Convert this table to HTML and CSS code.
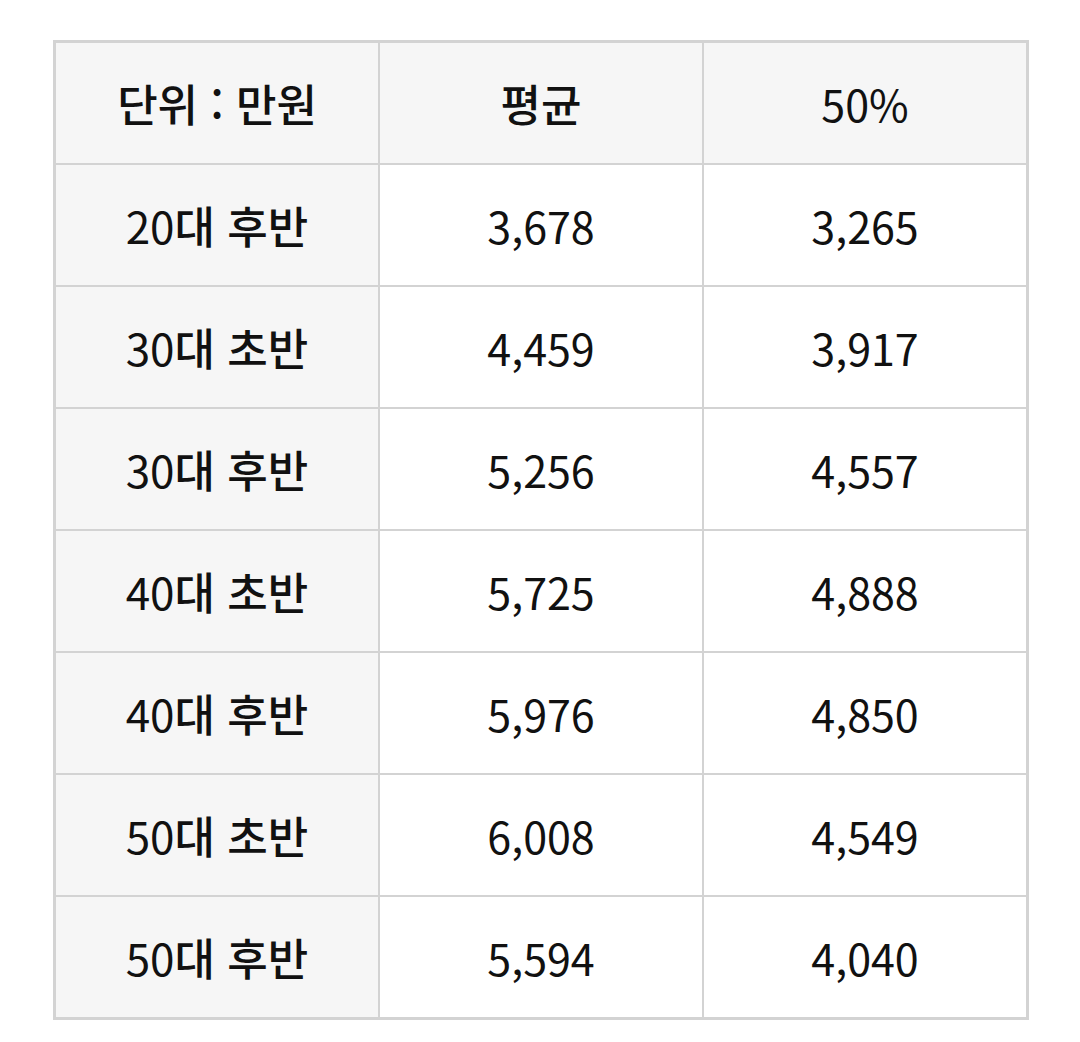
FILE: index.html
```html
<!DOCTYPE html>
<html lang="ko">
<head>
<meta charset="utf-8">
<link rel="stylesheet" href="styles.css">
</head>
<body>
<table class="salary">
  <thead>
    <tr><th>단위 : 만원</th><th>평균</th><th class="num">50%</th></tr>
  </thead>
  <tbody>
    <tr><th><span class="digits">20</span>대 후반</th><td>3,678</td><td>3,265</td></tr>
    <tr><th><span class="digits">30</span>대 초반</th><td>4,459</td><td>3,917</td></tr>
    <tr><th><span class="digits">30</span>대 후반</th><td>5,256</td><td>4,557</td></tr>
    <tr><th><span class="digits">40</span>대 초반</th><td>5,725</td><td>4,888</td></tr>
    <tr><th><span class="digits">40</span>대 후반</th><td>5,976</td><td>4,850</td></tr>
    <tr><th><span class="digits">50</span>대 초반</th><td>6,008</td><td>4,549</td></tr>
    <tr><th><span class="digits">50</span>대 후반</th><td>5,594</td><td>4,040</td></tr>
  </tbody>
</table>
</body>
</html>
```
FILE: styles.css
```css
html, body {
  margin: 0;
  padding: 0;
  background: #ffffff;
}
body {
  font-family: "Noto Sans CJK KR", "Noto Sans", sans-serif;
  color: #111111;
}
.salary {
  width: 976px;
  margin: 40px auto 0 53px;
  border: 2px solid #d3d3d3;
  border-collapse: separate;
  border-spacing: 0;
  table-layout: fixed;
}
.salary th,
.salary td {
  border: 1px solid #d3d3d3;
  height: 120px;
  padding: 0;
  text-align: center;
  vertical-align: middle;
  font-size: 43px;
  font-weight: 400;
  line-height: 1;
}
.salary th {
  background: #f6f6f6;
  font-size: 44px;
  font-weight: 500;
}
.salary thead th.num {
  font-size: 43px;
  font-weight: 400;
}
.salary .digits {
  font-weight: 400;
}
```
